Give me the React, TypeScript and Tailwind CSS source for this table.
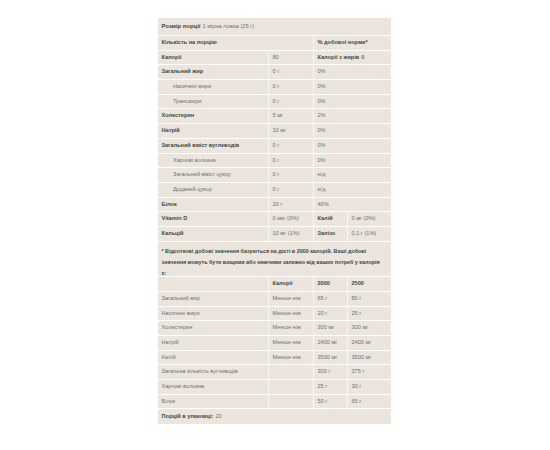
import React from "react";

const B = "font-bold text-[#3a4a45]";
const R = "text-[#6a746f]";

type Cell = { t: React.ReactNode; bold?: boolean; span?: number; indent?: boolean };

const W = ["w-[110px]", "w-[45px]", "w-[34px]", "flex-1"];

function Row({ cells, h = "h-[14.7px]", last }: { cells: Cell[]; h?: string; last?: boolean }) {
  let col = 0;
  return (
    <div className={`flex ${h} ${last ? "" : "border-b border-white"}`}>
      {cells.map((c, i) => {
        const start = col;
        const span = c.span ?? 1;
        col += span;
        let w = "";
        if (span === 1) w = W[start];
        else if (start === 0 && span === 2) w = "w-[155px]";
        else w = "flex-1";
        if (start + span === 4) w = "flex-1";
        return (
          <div
            key={i}
            className={`${w} flex items-center ${c.indent ? "pl-[15px]" : "pl-[3.5px]"} ${
              i > 0 ? "border-l border-white/70" : ""
            } ${c.bold ? B : R} whitespace-nowrap`}
          >
            {c.t}
          </div>
        );
      })}
    </div>
  );
}

export default function App() {
  return (
    <div
      className="w-[550px] h-[450px] bg-white pt-[18px]"
      style={{ fontFamily: '"Liberation Sans", Arial, sans-serif' }}
    >
      <div className="ml-[158px] w-[233px] bg-[#ebe5dd] text-[5.6px] leading-none">
        <div className="flex items-center h-[18px] border-b border-white pl-[3.5px]">
          <span className={`${B} text-[5.9px]`}>Розмір порції</span>
          <span className={`${R} ml-[2px]`}>1 мірна ложка (25 г)</span>
        </div>
        <Row cells={[{ t: "Кількість на порцію", bold: true, span: 2 }, { t: "% добової норми*", bold: true, span: 2 }]} />
        <Row
          cells={[
            { t: "Калорії", bold: true },
            { t: "80" },
            {
              t: (
                <>
                  <span className={B}>Калорії з жирів</span>
                  <span className={`${R} ml-[2px]`}>0</span>
                </>
              ),
              bold: true,
              span: 2,
            },
          ]}
        />
        <Row cells={[{ t: "Загальний жир", bold: true }, { t: "0 г" }, { t: "0%", span: 2 }]} />
        <Row cells={[{ t: "Насичені жири", indent: true }, { t: "0 г" }, { t: "0%", span: 2 }]} />
        <Row cells={[{ t: "Трансжири", indent: true }, { t: "0 г" }, { t: "0%", span: 2 }]} />
        <Row cells={[{ t: "Холестерин", bold: true }, { t: "5 мг" }, { t: "2%", span: 2 }]} />
        <Row cells={[{ t: "Натрій", bold: true }, { t: "10 мг" }, { t: "0%", span: 2 }]} />
        <Row cells={[{ t: "Загальний вміст вуглеводів", bold: true }, { t: "0 г" }, { t: "0%", span: 2 }]} />
        <Row cells={[{ t: "Харчові волокна", indent: true }, { t: "0 г" }, { t: "0%", span: 2 }]} />
        <Row cells={[{ t: "Загальний вміст цукру", indent: true }, { t: "0 г" }, { t: "н/д", span: 2 }]} />
        <Row cells={[{ t: "Доданий цукор", indent: true }, { t: "0 г" }, { t: "н/д", span: 2 }]} />
        <Row cells={[{ t: "Білок", bold: true }, { t: "20 г" }, { t: "40%", span: 2 }]} />
        <Row cells={[{ t: "Vitamin D", bold: true }, { t: "0 мкг (0%)" }, { t: "Калій", bold: true }, { t: "0 мг (0%)" }]} />
        <Row cells={[{ t: "Кальцій", bold: true }, { t: "10 мг (1%)" }, { t: "Залізо", bold: true }, { t: "0,1 г (1%)" }]} />
        <div className={`h-[35.6px] border-b border-white pl-[3.5px] pt-[4px] leading-[11px] text-[5.4px] ${B}`}>
          * Відсоткові добові значення базуються на дієті в 2000 калорій. Ваші добові
          <br />
          значення можуть бути вищими або нижчими залежно від ваших потреб у калорія
          <br />
          х:
        </div>
        <Row cells={[{ t: "" }, { t: "Калорії", bold: true }, { t: "2000", bold: true }, { t: "2500", bold: true }]} />
        <Row cells={[{ t: "Загальний жир" }, { t: "Менше ніж" }, { t: "65 г" }, { t: "80 г" }]} />
        <Row cells={[{ t: "Насичені жири" }, { t: "Менше ніж" }, { t: "20 г" }, { t: "25 г" }]} />
        <Row cells={[{ t: "Холестерин" }, { t: "Менше ніж" }, { t: "300 мг" }, { t: "300 мг" }]} />
        <Row cells={[{ t: "Натрій" }, { t: "Менше ніж" }, { t: "2400 мг" }, { t: "2400 мг" }]} />
        <Row cells={[{ t: "Калій" }, { t: "Менше ніж" }, { t: "3500 мг" }, { t: "3500 мг" }]} />
        <Row cells={[{ t: "Загальна кількість вуглеводів" }, { t: "" }, { t: "300 г" }, { t: "375 г" }]} />
        <Row cells={[{ t: "Харчові волокна" }, { t: "" }, { t: "25 г" }, { t: "30 г" }]} />
        <Row cells={[{ t: "Білок" }, { t: "" }, { t: "50 г" }, { t: "65 г" }]} />
        <div className="flex items-center h-[15px] pl-[3.5px]">
          <span className={B}>Порцій в упаковці:</span>
          <span className={`${R} ml-[2px]`}>20</span>
        </div>
      </div>
    </div>
  );
}
